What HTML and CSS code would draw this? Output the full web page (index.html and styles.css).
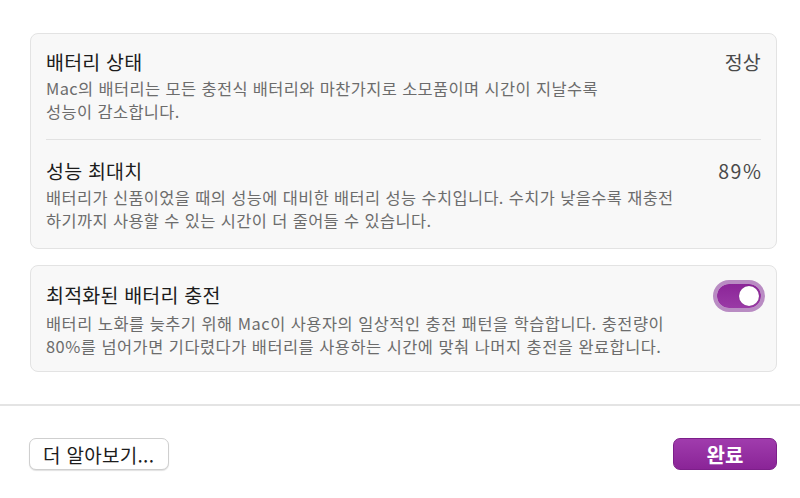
FILE: index.html
```html
<!DOCTYPE html>
<html lang="ko">
<head>
<meta charset="utf-8">
<link rel="stylesheet" href="styles.css">
</head>
<body>
<div class="window">
  <main class="content">
    <section class="card">
      <div class="row">
        <div class="text">
          <div class="title">배터리 상태</div>
          <div class="desc">Mac의 배터리는 모든 충전식 배터리와 마찬가지로 소모품이며 시간이 지날수록<br>성능이 감소합니다.</div>
        </div>
        <div class="value">정상</div>
      </div>
      <div class="sep"></div>
      <div class="row row-second">
        <div class="text">
          <div class="title">성능 최대치</div>
          <div class="desc">배터리가 신품이었을 때의 성능에 대비한 배터리 성능 수치입니다. 수치가 낮을수록 재충전<br>하기까지 사용할 수 있는 시간이 더 줄어들 수 있습니다.</div>
        </div>
        <div class="value value-num">89%</div>
      </div>
    </section>
    <section class="card card-two">
      <div class="row row-toggle">
        <div class="text">
          <div class="title">최적화된 배터리 충전</div>
          <div class="desc desc-toggle">배터리 노화를 늦추기 위해 Mac이 사용자의 일상적인 충전 패턴을 학습합니다. 충전량이<br>80%를 넘어가면 기다렸다가 배터리를 사용하는 시간에 맞춰 나머지 충전을 완료합니다.</div>
        </div>
        <div class="toggle"><div class="knob"></div></div>
      </div>
    </section>
  </main>
  <footer class="footer">
    <button class="btn btn-plain">더 알아보기...</button>
    <button class="btn btn-primary">완료</button>
  </footer>
</div>
</body>
</html>
```

FILE: styles.css
```css
html, body {
  margin: 0;
  padding: 0;
  background: #ffffff;
}
body {
  font-family: "Noto Sans CJK KR", "Noto Sans", sans-serif;
  color: #1e1e1e;
  width: 800px;
  height: 498px;
  overflow: hidden;
}
.window {
  display: flex;
  flex-direction: column;
  height: 498px;
}
.content {
  padding: 33px 23px 0 30px;
  display: flex;
  flex-direction: column;
  gap: 16px;
}
.card {
  background: #f8f8f8;
  border: 1px solid #e3e3e3;
  border-radius: 8px;
  padding: 0 15px;
}
.row {
  display: flex;
  justify-content: space-between;
  align-items: flex-start;
  padding: 16px 0 16px 0;
}
.row-second {
  padding: 19px 0 16px 0;
}
.row-toggle {
  padding: 17px 0 13px 0;
}
.title {
  font-size: 19.5px;
  line-height: 24px;
  color: #1c1c1c;
  letter-spacing: 0.2px;
}
.desc {
  font-size: 16.4px;
  line-height: 23px;
  color: #6c6c6c;
  margin-top: 3px;
  white-space: nowrap;
  letter-spacing: 0.4px;
}
.desc-toggle {
  margin-top: 5px;
  letter-spacing: 0.5px;
}
.value {
  font-size: 19.5px;
  line-height: 24px;
  color: #4a4a4a;
  letter-spacing: 0.2px;
}
.value-num {
  letter-spacing: 1.6px;
  margin-right: -1.6px;
}
.sep {
  height: 1px;
  background: #e2e2e2;
}
.toggle {
  width: 44px;
  height: 24px;
  border-radius: 12px;
  background: linear-gradient(#8b2598, #9a3aa6);
  box-shadow: 0 0 0 4px #b98cc3;
  position: relative;
  margin-top: 1px;
}
.knob {
  position: absolute;
  right: 2px;
  top: 2px;
  width: 20px;
  height: 20px;
  border-radius: 50%;
  background: #ffffff;
  box-shadow: 0 0 1px rgba(0,0,0,0.3);
}
.footer {
  margin-top: 32px;
  border-top: 2px solid #e4e4e4;
  padding: 32px 23px 0 29px;
  display: flex;
  justify-content: space-between;
}
.btn {
  font-family: "Noto Sans CJK KR", "Noto Sans", sans-serif;
  height: 32px;
  border-radius: 7px;
  padding: 0;
  cursor: default;
}
.btn-plain {
  width: 140px;
  font-size: 19px;
  background: #ffffff;
  border: 1px solid #cfcfcf;
  box-shadow: 0 1px 1px rgba(0,0,0,0.12);
  color: #1c1c1c;
  text-align: left;
  padding-left: 13px;
  letter-spacing: 0.3px;
}
.btn-primary {
  width: 104px;
  font-size: 20px;
  background: linear-gradient(#a03cad, #8a2497);
  border: 1px solid #7d1f8a;
  color: #ffffff;
  font-weight: 700;
}
```
